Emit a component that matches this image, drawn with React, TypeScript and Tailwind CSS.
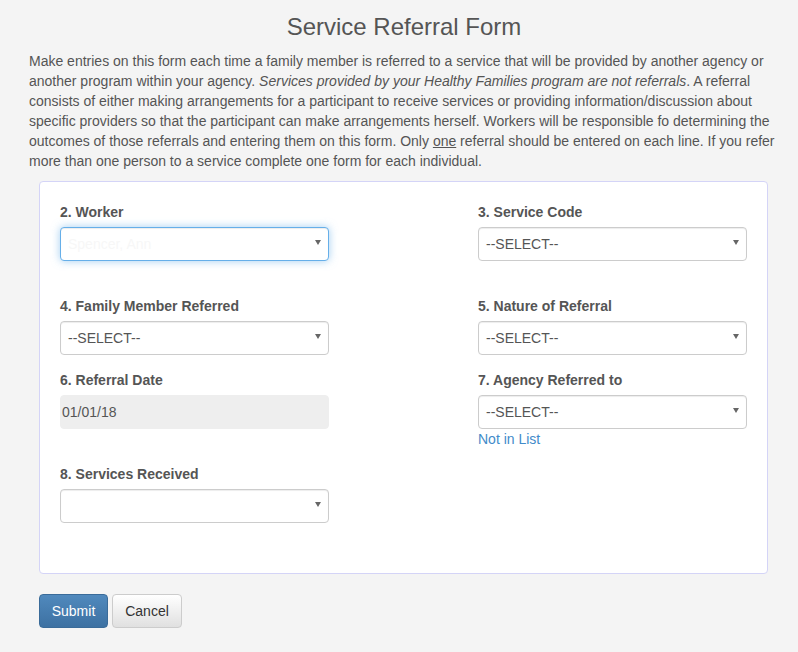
const font = { fontFamily: '"Liberation Sans", Arial, sans-serif' }

function Caret() {
  return <span className="absolute right-[7px] top-[12px] h-0 w-0 border-x-[3px] border-t-[5px] border-x-transparent border-t-[#666]" />
}

function FakeSelect({ text, focused, faint }: { text?: string; focused?: boolean; faint?: boolean }) {
  return (
    <div
      className={`relative h-[34px] rounded-[4px] border bg-white pl-[7px] text-[14px] leading-[32px] ${
        focused
          ? 'border-[#66afe9] shadow-[inset_0_1px_1px_rgba(0,0,0,0.075),0_0_8px_rgba(102,175,233,0.6)]'
          : 'border-[#ccc] shadow-[inset_0_1px_1px_rgba(0,0,0,0.075)]'
      }`}
    >
      <span className={faint ? 'text-[#f7f7f7]' : 'text-[#555]'}>{text}</span>
      <Caret />
    </div>
  )
}

function Field({ label, children }: { label: string; children: React.ReactNode }) {
  return (
    <div className="mb-[15px]">
      <div className="mb-[5px] text-[14px] font-bold leading-[20px] text-[#555]">{label}</div>
      {children}
    </div>
  )
}

export default function App() {
  return (
    <div className="min-h-[652px] bg-[#f4f4f4] text-[#555]" style={font}>
      <h1 className="pl-[10px] pt-[14px] text-center text-[24px] leading-[26px] text-[#555]">Service Referral Form</h1>
      <p className="mt-[11px] pl-[29px] pr-[20px] text-[14px] leading-[20px]">
        Make entries on this form each time a family member is referred to a service that will be provided by another agency or
        another program within your agency. <i>Services provided by your Healthy Families program are not referrals</i>. A
        referral consists of either making arrangements for a participant to receive services or providing
        information/discussion about specific providers so that the participant can make arrangements herself. Workers will be
        responsible fo determining the outcomes of those referrals and entering them on this form. Only <u>one</u> referral
        should be entered on each line. If you refer more than one person to a service complete one form for each individual.
      </p>
      <div className="ml-[39px] mr-[30px] mt-[10px] rounded-[4px] border border-[#d4d4f7] bg-white pb-[35px] pl-[20px] pr-[20px] pt-[20px]">
        <div className="grid grid-cols-[269px_269px] justify-between">
          <div className="pb-[20px]">
            <Field label="2. Worker">
              <FakeSelect text="Spencer, Ann" focused faint />
            </Field>
          </div>
          <div>
            <Field label="3. Service Code">
              <FakeSelect text="--SELECT--" />
            </Field>
          </div>
          <Field label="4. Family Member Referred">
            <FakeSelect text="--SELECT--" />
          </Field>
          <Field label="5. Nature of Referral">
            <FakeSelect text="--SELECT--" />
          </Field>
          <Field label="6. Referral Date">
            <div className="h-[34px] rounded-[4px] border border-[#eee] bg-[#eee] pl-[1px] text-[14px] leading-[32px] text-[#555]">
              01/01/18
            </div>
          </Field>
          <Field label="7. Agency Referred to">
            <FakeSelect text="--SELECT--" />
            <a className="block text-[14px] leading-[20px] text-[#428bca]">Not in List</a>
          </Field>
          <Field label="8. Services Received">
            <FakeSelect />
          </Field>
          <div />
        </div>
      </div>
      <div className="ml-[39px] mt-[20px] flex gap-[4px]">
        <button className="h-[34px] w-[69px] rounded-[4px] border border-[#3a6b99] bg-gradient-to-b from-[#5089bd] to-[#3d71a2] text-[14px] text-white">
          Submit
        </button>
        <button className="h-[34px] w-[70px] rounded-[4px] border border-[#ccc] bg-gradient-to-b from-white to-[#e0e0e0] text-[14px] text-[#333]">
          Cancel
        </button>
      </div>
    </div>
  )
}
